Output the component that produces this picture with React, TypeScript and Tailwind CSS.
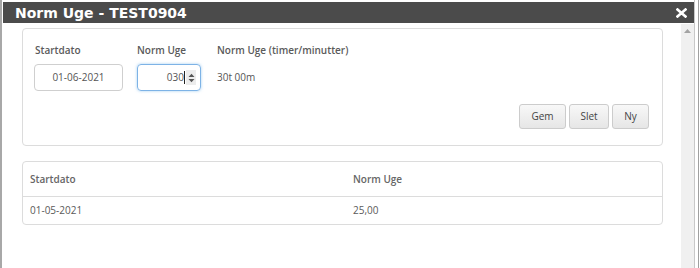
import React from "react";

const os = { fontFamily: '"Open Sans", "Liberation Sans", sans-serif' };

export default function App() {
  return (
    <div className="w-[700px] h-[268px] bg-white flex overflow-hidden" style={os}>
      <div className="w-[2px] h-full bg-[#a8a8a8]" />
      <div className="w-[1px]" />
      <div className="w-[691px] flex flex-col pt-[2px]">
        <div className="h-[21px] bg-[#4b4b4b] flex items-center justify-between pl-[12px] pr-[7px]">
          <span
            className="text-white font-bold text-[14px] leading-none"
            style={{ fontFamily: '"DejaVu Sans", Verdana, sans-serif' }}
          >
            Norm Uge - TEST0904
          </span>
          <svg width="11" height="10" viewBox="0 0 11 10">
            <path d="M1.5 1.5 L9.5 8.5 M9.5 1.5 L1.5 8.5" stroke="#fff" strokeWidth="2.6" strokeLinecap="square" />
          </svg>
        </div>
        <div className="flex flex-1 pt-[1px]">
          <div className="flex-1 pl-[19px] pt-[4px]">
            <div className="w-[641px] h-[118px] border border-[#dcdcdc] rounded-[4px] pl-[11px] pr-[13px] pt-[14px] flex flex-col">
              <div className="flex">
                <div className="w-[103px] flex flex-col">
                  <span className="text-[10px] font-semibold text-[#5a5a5a] pl-[1px] h-[14px] leading-[14px]">Startdato</span>
                  <div className="mt-[7px] w-[89px] h-[27px] border border-[#cfcfcf] rounded-[4px] flex items-center justify-center text-[10px] text-[#555]">
                    01-06-2021
                  </div>
                </div>
                <div className="w-[80px] flex flex-col">
                  <span className="text-[10px] font-semibold text-[#5a5a5a] h-[14px] leading-[14px]">Norm Uge</span>
                  <div className="mt-[7px] w-[64px] h-[27px] border border-[#7eb3e6] rounded-[4px] shadow-[0_0_3px_rgba(102,175,233,0.6)] flex items-center justify-end pr-[4px] text-[10px] text-[#555]">
                    <span>030</span>
                    <span className="w-[1px] h-[13px] bg-[#222] ml-[0px]" />
                    <span className="ml-[1px] w-[10px] h-[15px] bg-[#ececec] flex items-center justify-center">
                      <svg width="7" height="10" viewBox="0 0 7 10">
                        <path d="M0.5 4 L3.5 0.8 L6.5 4 Z M0.5 6 L3.5 9.2 L6.5 6 Z" fill="#555" />
                      </svg>
                    </span>
                  </div>
                </div>
                <div className="flex flex-col">
                  <span className="text-[10px] font-semibold text-[#5a5a5a] h-[14px] leading-[14px]">Norm Uge (timer/minutter)</span>
                  <span className="mt-[7px] h-[27px] flex items-center text-[10px] text-[#555]">30t 00m</span>
                </div>
              </div>
              <div className="flex justify-end gap-[3px] mt-[13px]">
                {["Gem", "Slet", "Ny"].map((b, i) => (
                  <button
                    key={b}
                    className={`h-[25px] ${i === 0 ? "w-[47px]" : i === 1 ? "w-[40px]" : "w-[37px]"} border border-[#cccccc] rounded-[3px] bg-gradient-to-b from-[#f8f8f8] to-[#e6e6e6] text-[10px] text-[#444] flex items-center justify-center`}
                  >
                    {b}
                  </button>
                ))}
              </div>
            </div>
            <div className="mt-[15px] w-[641px] border border-[#dcdcdc] rounded-[4px] text-[10px] text-[#5a5a5a]">
              <div className="h-[35px] flex items-center border-b border-[#dcdcdc] font-semibold text-[#666]">
                <span className="w-[330px] pl-[7px]">Startdato</span>
                <span>Norm Uge</span>
              </div>
              <div className="h-[27px] flex items-center">
                <span className="w-[330px] pl-[7px]">01-05-2021</span>
                <span>25,00</span>
              </div>
            </div>
          </div>
          <div className="w-[13px] h-full bg-[#f0f0f0] flex justify-center pt-[5px]">
            <svg width="7" height="4" viewBox="0 0 7 4">
              <path d="M0 4 L3.5 0 L7 4 Z" fill="#a3a3a3" />
            </svg>
          </div>
        </div>
      </div>
      <div className="w-[1px] h-full bg-[#c8c8c8]" />
      <div className="w-[3px]" />
      <div className="w-[1px] h-full bg-[#a0a0a0]" />
    </div>
  );
}
